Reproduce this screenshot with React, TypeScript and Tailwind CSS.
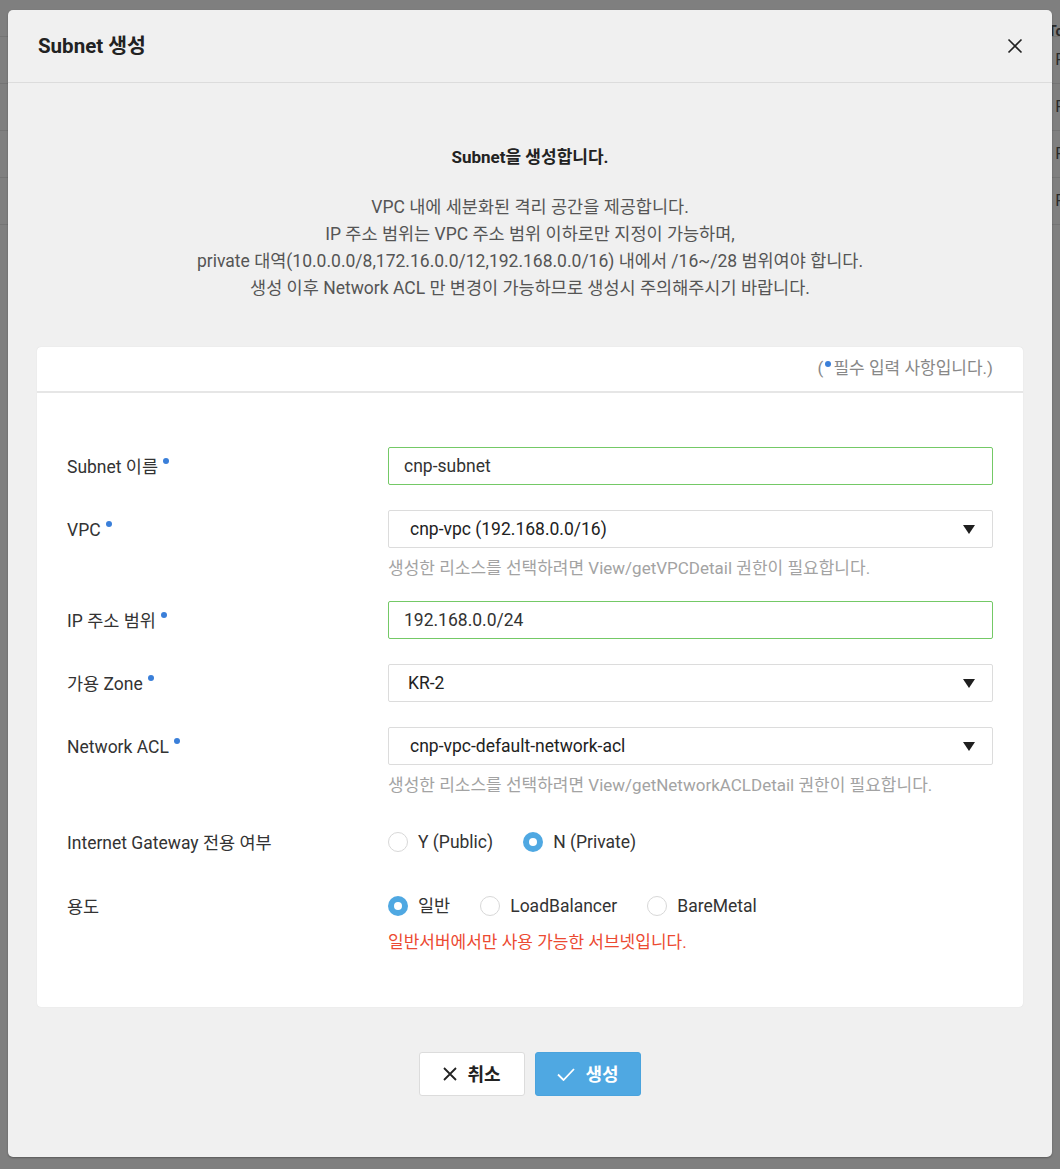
import type { ReactNode } from 'react'

const font = { fontFamily: 'Roboto, "Noto Sans CJK KR", sans-serif' }

function Dot() {
  return <span className="ml-[5px] inline-block h-[6px] w-[6px] -translate-y-[7px] rounded-full bg-[#3a7fd9]" />
}

function Row({ label, required, children }: { label: string; required?: boolean; children: ReactNode }) {
  return (
    <div className="flex">
      <div className="flex h-[38px] w-[321px] shrink-0 items-center pt-[3px] text-[17.5px] text-[#333]">
        <span>{label}</span>
        {required && <Dot />}
      </div>
      <div className="min-w-0 flex-1">{children}</div>
    </div>
  )
}

function TextInput({ value }: { value: string }) {
  return (
    <div className="flex h-[38px] items-center rounded-[2px] border border-[#74c966] bg-white px-[15px] text-[17.5px] text-[#333]">
      {value}
    </div>
  )
}

function Select({ value, pad = 'pl-[21px]' }: { value: string; pad?: string }) {
  return (
    <div className={`flex h-[38px] items-center justify-between rounded-[2px] border border-[#dcdcdc] bg-white pr-[17px] text-[17.5px] text-[#222] ${pad}`}>
      <span>{value}</span>
      <svg width="12" height="9" viewBox="0 0 12 9">
        <path d="M0 0h12L6 9z" fill="#1f1f1f" />
      </svg>
    </div>
  )
}

function Help({ children, red }: { children: ReactNode; red?: boolean }) {
  return (
    <div className={`text-[17px] leading-[20px] ${red ? 'mt-[7px] text-[#ec4a32]' : 'mt-[10px] text-[#a3a3a3]'}`}>{children}</div>
  )
}

function Radio({ label, checked }: { label: string; checked?: boolean }) {
  return (
    <div className="mr-[30px] flex items-center gap-[10px]">
      {checked ? (
        <span className="flex h-[20px] w-[20px] items-center justify-center rounded-full bg-[#4fa8e2]">
          <span className="h-[8px] w-[8px] rounded-full bg-white" />
        </span>
      ) : (
        <span className="h-[20px] w-[20px] rounded-full border border-[#d8d8d8] bg-white" />
      )}
      <span className="text-[17.5px] text-[#333]">{label}</span>
    </div>
  )
}

function Backdrop() {
  const rows = [60, 107, 155, 201]
  return (
    <div className="absolute inset-0 bg-[#7f7f7f]">
      <div className="flex h-[37px] items-end border-b border-[#747474] text-[15px] font-bold text-[#2a2a2a]">
        <span className="ml-[262px] -mb-[6px]">VPC 이름 ▲</span>
        <span className="ml-[230px] -mb-[6px]">IP 주소 범위 ▲</span>
        <span className="ml-auto -mb-[6px] mr-[-4px]">To</span>
      </div>
      {rows.map((r) => (
        <div key={r} className="flex h-[47px] items-center justify-end border-b border-[#747474] text-[16px] text-[#2a2a2a]">
          <span className="-mr-[4px]">F</span>
        </div>
      ))}
    </div>
  )
}

export default function App() {
  return (
    <div className="relative h-[1169px] w-[1060px] overflow-hidden" style={font}>
      <Backdrop />
      <div className="absolute left-[8px] top-[10px] flex h-[1147px] w-[1044px] flex-col rounded-[5px] bg-[#f0f0f0] shadow-[0_1px_2px_rgba(0,0,0,0.3)]">
        <div className="flex h-[73px] shrink-0 items-center justify-between border-b border-[#dcdcdc] pl-[30px] pr-[29px]">
          <h1 className="text-[20.5px] font-bold text-[#222]">Subnet 생성</h1>
          <svg width="16" height="16" viewBox="0 0 16 16">
            <path d="M1.5 1.5l13 13M14.5 1.5l-13 13" stroke="#222" strokeWidth="1.6" />
          </svg>
        </div>

        <div className="flex flex-col px-[29px] pt-[64px]">
          <p className="text-center text-[17px] font-bold leading-[20px] text-[#222]">Subnet을 생성합니다.</p>
          <div className="mt-[27px] text-center text-[17.5px] leading-[27px] text-[#555]">
            <p>VPC 내에 세분화된 격리 공간을 제공합니다.</p>
            <p>IP 주소 범위는 VPC 주소 범위 이하로만 지정이 가능하며,</p>
            <p>private 대역(10.0.0.0/8,172.16.0.0/12,192.168.0.0/16) 내에서 /16~/28 범위여야 합니다.</p>
            <p>생성 이후 Network ACL 만 변경이 가능하므로 생성시 주의해주시기 바랍니다.</p>
          </div>

          <div className="mt-[45px] rounded-[4px] bg-white shadow-[0_0_1px_rgba(0,0,0,0.15)]">
            <div className="flex h-[46px] items-center justify-end border-b-2 border-[#e6e6e6] pr-[30px] text-[17px] text-[#888]">
              <span>(</span>
              <span className="mx-[2px] inline-block h-[6px] w-[6px] -translate-y-[5px] rounded-full bg-[#3a7fd9]" />
              <span>필수 입력 사항입니다.)</span>
            </div>

            <div className="flex flex-col pb-[55px] pl-[30px] pr-[30px] pt-[54px]">
              <Row label="Subnet 이름" required>
                <TextInput value="cnp-subnet" />
              </Row>
              <div className="mt-[25px]">
                <Row label="VPC" required>
                  <Select value="cnp-vpc (192.168.0.0/16)" />
                  <Help>생성한 리소스를 선택하려면 View/getVPCDetail 권한이 필요합니다.</Help>
                </Row>
              </div>
              <div className="mt-[23px]">
                <Row label="IP 주소 범위" required>
                  <TextInput value="192.168.0.0/24" />
                </Row>
              </div>
              <div className="mt-[25px]">
                <Row label="가용 Zone" required>
                  <Select value="KR-2" pad="pl-[19px]" />
                </Row>
              </div>
              <div className="mt-[25px]">
                <Row label="Network ACL" required>
                  <Select value="cnp-vpc-default-network-acl" />
                  <Help>생성한 리소스를 선택하려면 View/getNetworkACLDetail 권한이 필요합니다.</Help>
                </Row>
              </div>
              <div className="mt-[28px]">
                <Row label="Internet Gateway 전용 여부">
                  <div className="flex h-[38px] items-center">
                    <Radio label="Y (Public)" />
                    <Radio label="N (Private)" checked />
                  </div>
                </Row>
              </div>
              <div className="mt-[26px]">
                <Row label="용도">
                  <div className="flex h-[38px] items-center">
                    <Radio label="일반" checked />
                    <Radio label="LoadBalancer" />
                    <Radio label="BareMetal" />
                  </div>
                  <Help red>일반서버에서만 사용 가능한 서브넷입니다.</Help>
                </Row>
              </div>
            </div>
          </div>

          <div className="mt-[45px] flex justify-center gap-[10px]">
            <button className="flex h-[44px] w-[106px] items-center justify-center gap-[10px] rounded-[3px] border border-[#dcdcdc] bg-white text-[18px] font-bold text-[#222]">
              <svg width="14" height="14" viewBox="0 0 14 14">
                <path d="M1 1l12 12M13 1L1 13" stroke="#222" strokeWidth="1.8" />
              </svg>
              취소
            </button>
            <button className="flex h-[44px] w-[106px] items-center justify-center gap-[10px] rounded-[3px] border border-[#4aa3dd] bg-[#4fa8e2] text-[18px] font-bold text-white">
              <svg width="18" height="13" viewBox="0 0 18 13">
                <path d="M1 6.5l5.5 5.5L17 1" stroke="#fff" strokeWidth="1.8" fill="none" />
              </svg>
              생성
            </button>
          </div>
        </div>
      </div>
    </div>
  )
}
